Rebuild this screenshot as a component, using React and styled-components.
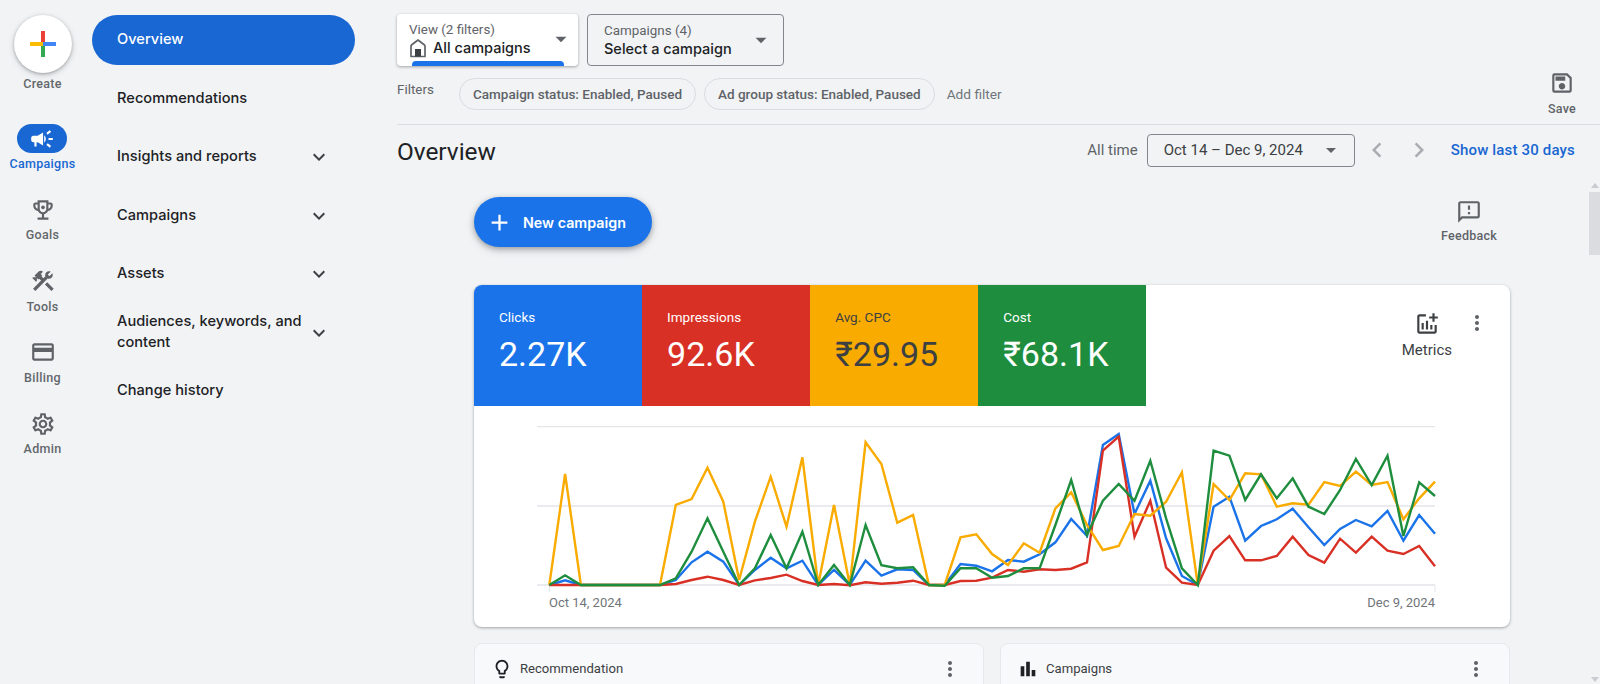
import React from "react";
import styled, { createGlobalStyle } from "styled-components";
import {
  MdCampaign, MdConstruction, MdOutlineCreditCard, MdOutlineSettings, MdOutlineSave,
  MdOutlineFeedback, MdOutlineAddchart, MdLightbulbOutline, MdBarChart, MdMoreVert,
  MdExpandMore, MdChevronLeft, MdChevronRight, MdArrowDropDown, MdAdd,
} from "react-icons/md";

const Global = createGlobalStyle`
  html, body { margin: 0; height: 684px; overflow: hidden; background: #f1f3f5; }
  * { box-sizing: border-box; }
  body { font-family: Roboto, "Liberation Sans", sans-serif; color: #202124; }
`;

const Page = styled.div`display: flex; width: 1600px; height: 684px; overflow: hidden;`;

const Rail = styled.nav`width: 85px; flex: none; display: flex; flex-direction: column; align-items: center; padding-top: 15px;`;
const CreateButton = styled.div`
  width: 58px; height: 58px; border-radius: 50%; background: #fff;
  box-shadow: 0 1px 3px rgba(60,64,67,.35), 0 2px 6px rgba(60,64,67,.2);
  display: flex; align-items: center; justify-content: center;
`;
const RailLabel = styled.div`
  font-size: 12.5px; font-weight: 500; line-height: 16px; letter-spacing: .3px;
  color: ${p => (p.$active ? "#1967d2" : "#63676b")};
`;
const CreateLabel = styled(RailLabel)`margin: 3px 0 32px;`;
const RailItem = styled.div`display: flex; flex-direction: column; align-items: center; gap: 3px; height: 71.3px;`;
const RailIcon = styled.div`
  width: 50px; height: 29px; border-radius: 15px; display: flex; align-items: center; justify-content: center;
  background: ${p => (p.$active ? "#1967d2" : "transparent")};
  color: ${p => (p.$active ? "#fff" : "#5f6368")};
  font-size: 26px;
`;

const NavColumn = styled.div`width: 312px; flex: none; padding: 15px 0 0 7px; display: flex; flex-direction: column; gap: 8.5px;`;
const NavItem = styled.div`
  width: 263px; height: 50px; border-radius: 25px; padding: 0 24px 0 25px;
  display: flex; align-items: center; justify-content: space-between;
  background: ${p => (p.$active ? "#1967d2" : "transparent")};
  color: ${p => (p.$active ? "#fff" : "#202124")};
  font-family: Inter, Roboto, sans-serif; font-size: 14.6px; font-weight: 500; line-height: 21px; letter-spacing: .03px;
`;
const NavText = styled.span`max-width: 190px; padding-bottom: 1px;`;
const NavChevron = styled(MdExpandMore)`font-size: 24px; color: #3c4043; flex: none;`;

const Main = styled.main`flex: 1; min-width: 0; display: flex; flex-direction: column;`;
const TopBar = styled.header`display: flex; justify-content: space-between; align-items: flex-start; height: 125px; border-bottom: 1px solid #dadce0; padding: 14px 24px 0 0;`;
const TopLeft = styled.div`display: flex; flex-direction: column; gap: 12px;`;
const Selectors = styled.div`display: flex; gap: 9px;`;
const Selector = styled.div`
  position: relative; height: 52px; width: ${p => p.$w}px; border-radius: 4px; padding: ${p => p.$pad};
  display: flex; flex-direction: column; justify-content: flex-start; overflow: hidden;
  background: ${p => (p.$raised ? "#fff" : "transparent")};
  border: ${p => (p.$raised ? "none" : "1px solid #80868b")};
  box-shadow: ${p => (p.$raised ? "0 1px 3px rgba(60,64,67,.45)" : "none")};
`;
const SelectorHint = styled.div`font-size: 13.4px; line-height: 16px; color: #5f6368;`;
const SelectorValue = styled.div`
  display: flex; align-items: center; gap: 6px;
  font-family: Inter, Roboto, sans-serif; font-size: 14.5px; font-weight: 500; line-height: 20px; color: #202124;
`;
const SelectorArrow = styled(MdArrowDropDown)`position: absolute; right: ${p => p.$r}px; top: 12px; font-size: 26px; color: #5f6368;`;
const SelectorBar = styled.div`position: absolute; left: 15px; right: 14px; bottom: 0; height: 5px; background: #1a73e8; border-radius: 4px 4px 0 0;`;

const FilterRow = styled.div`display: flex; align-items: center; height: 32px;`;
const FilterLabel = styled.div`font-size: 13.4px; color: #5f6368; width: 62px; margin-top: -10px;`;
const Chip = styled.div`
  height: 32px; padding: 0 13px; border: 1px solid #dadce0; border-radius: 16px; margin-right: 8px;
  display: flex; align-items: center; font-size: 13.5px; font-weight: 500; color: #5f6368; white-space: nowrap;
`;
const AddFilter = styled.div`font-size: 13.7px; color: #70757a; margin-left: 4px;`;
const ToolButton = styled.div`display: flex; flex-direction: column; align-items: center; gap: 2px; color: #5f6368; font-size: 12.5px; font-weight: 500; letter-spacing: .25px; line-height: 16px;`;
const SaveButton = styled(ToolButton)`margin-top: 56px; gap: 5px;`;
const ToolGlyph = styled.div`font-size: 26px; line-height: 0; color: #5f6368;`;

const TitleRow = styled.div`height: 51px; flex: none; display: flex; align-items: center; padding: 0 25px 1px 0;`;
const Title = styled.h1`margin: 3px 0 0; font-size: 24.4px; font-weight: 400; color: #202124; flex: 1;`;
const RangeLabel = styled.div`font-size: 15px; color: #5f6368; margin-right: 9px;`;
const DateBox = styled.div`
  width: 208px; height: 33px; border: 1px solid #80868b; border-radius: 4px; padding: 0 11px 0 16px;
  display: flex; align-items: center; justify-content: space-between; font-size: 15px; color: #3c4043;
`;
const DateArrow = styled(MdArrowDropDown)`font-size: 24px; color: #5f6368;`;
const Pager = styled.div`display: flex; gap: 12px; margin: 0 17px 0 7px; font-size: 30px; color: #a9adb1; line-height: 0;`;
const LinkText = styled.a`font-size: 15px; font-weight: 500; color: #1967d2; letter-spacing: .17px;`;

const Scroller = styled.div`position: relative; flex: 1; min-height: 0; overflow: hidden; padding: 21px 90px 0 77px;`;
const ScrollBar = styled.div`position: absolute; top: 0; right: 0; bottom: 0; width: 11px; display: flex; flex-direction: column; align-items: center;`;
const ScrollUp = styled.div`margin-top: 7px; width: 0; height: 0; border: 4px solid transparent; border-top: 0; border-bottom: 5px solid #c9ccd0;`;
const ScrollThumb = styled.div`width: 11px; height: 63px; margin-top: 4px; background: #dadce0;`;
const ScrollDown = styled.div`margin-top: auto; margin-bottom: 2px; width: 0; height: 0; border: 4px solid transparent; border-bottom: 0; border-top: 5px solid #c9ccd0;`;

const ActionRow = styled.div`height: 50px; display: flex; justify-content: space-between; align-items: flex-start; padding-right: 13px; margin-bottom: 38px;`;
const NewCampaign = styled.button`
  width: 178px; height: 50px; border: 0; border-radius: 25px; background: #1a73e8; color: #fff; padding: 0 0 0 12px;
  display: flex; align-items: center; gap: 10px;
  font-family: Inter, Roboto, sans-serif; font-size: 14.3px; font-weight: 600;
  box-shadow: 0 2px 5px rgba(60,64,67,.35), 0 3px 10px rgba(60,64,67,.2);
`;
const FeedbackButton = styled(ToolButton)`margin-top: 2px; gap: 3px;`;

const MetricCard = styled.section`background: #fff; border-radius: 8px; height: 342px; overflow: hidden; box-shadow: 0 1px 3px rgba(60,64,67,.45);`;
const TileRow = styled.div`display: flex; height: 121px;`;
const Tile = styled.div`
  width: 168.1px; background: ${p => p.$bg}; color: ${p => p.$fg}; padding: 24px 0 0 25px;
`;
const TileLabel = styled.div`font-size: 13.5px; line-height: 16px;`;
const TileValue = styled.div`font-size: 34px; line-height: 40px; margin-top: 9px;`;
const CardTools = styled.div`flex: 1; display: flex; justify-content: flex-end; align-items: flex-start; padding: 26px 21px 0 0; gap: 13px;`;
const MetricsButton = styled.div`display: flex; flex-direction: column; align-items: center; gap: 4px; font-size: 15px; color: #3c4043;`;
const MetricsGlyph = styled.div`font-size: 26px; line-height: 0; color: #3c4043;`;
const DotsGlyph = styled(MdMoreVert)`font-size: 24px; color: #5f6368; flex: none;`;
const ChartSvg = styled.svg`display: block; width: 100%; height: 186px;`;
const ChartFoot = styled.div`display: flex; justify-content: space-between; padding: 3px 75px 0 75px; font-size: 13px; color: #70757a;`;

const BottomGrid = styled.div`display: grid; grid-template-columns: 1fr 1fr; gap: 16px; margin-top: 16px;`;
const MiniCard = styled.section`height: 90px; background: #f8f9fb; border: 1px solid #e6e8eb; border-radius: 8px; padding: 13px 21px 0 16px; display: flex; align-items: flex-start;`;
const MiniIcon = styled.div`font-size: 22px; line-height: 0; color: #202124; margin-right: 7px; height: 24px; display: flex; align-items: center;`;
const MiniTitle = styled.div`flex: 1; font-size: 13.1px; line-height: 24px; color: #3c4043;`;

const base = 585;
const toY = zy => 410 + zy / 3;
const series = [
  ["#1a73e8", [525,511,525,525,525,525,525,525,510,457,425,455,525,480,443,475,452,525,480,525,452,497,478,480,525,525,462,467,484,450,455,433,397,327,378,105,72,312,212,385,498,525,290,260,392,348,328,296,352,405,357,330,349,303,392,315,371]],
  ["#d93025", [525,525,525,525,525,525,525,525,522,510,500,510,525,511,504,494,513,525,522,526,517,521,518,512,525,525,513,512,503,480,485,478,480,476,457,122,80,380,272,473,518,525,422,378,451,451,438,380,435,458,386,428,380,422,432,408,469]],
  ["#f9ab00", [525,192,525,525,525,525,525,525,285,267,173,275,510,335,200,350,142,525,285,525,97,162,338,315,525,525,382,373,432,465,400,428,295,247,345,420,408,312,317,275,187,525,222,270,190,193,290,280,284,216,228,185,225,216,328,265,215]],
  ["#1e8e3e", [525,496,525,525,525,525,525,525,505,425,325,425,525,475,375,475,365,525,465,525,345,466,475,472,525,527,475,475,503,498,475,475,345,210,375,272,222,272,152,325,475,525,122,137,270,193,265,205,290,312,240,147,225,137,378,217,258]],
];
const pts = ys => ys.map((y, i) => `${(549.3 + 15.816 * i).toFixed(1)},${toY(y).toFixed(1)}`).join(" ");

const ColorPlus = () => (
  <svg width="28" height="28" viewBox="0 0 28 28">
    <rect x="12" y="1" width="4" height="13" fill="#ea4335" />
    <rect x="12" y="14" width="4" height="13" fill="#34a853" />
    <rect x="1" y="12" width="13" height="4" fill="#fbbc04" />
    <rect x="14" y="12" width="13" height="4" fill="#4285f4" />
  </svg>
);
const Trophy = () => (
  <svg width="26" height="26" viewBox="0 0 24 24" fill="currentColor">
    <path d="M19 5h-2V3H7v2H5c-1.1 0-2 .9-2 2v1c0 2.55 1.92 4.63 4.39 4.94.63 1.5 1.98 2.63 3.61 2.96V19H7v2h10v-2h-4v-3.1c1.63-.33 2.98-1.46 3.61-2.96C19.08 12.63 21 10.55 21 8V7c0-1.1-.9-2-2-2zM5 8V7h2v3.82C5.84 10.4 5 9.3 5 8zm7 6c-1.65 0-3-1.35-3-3V5h6v6c0 1.65-1.35 3-3 3zm7-6c0 1.3-.84 2.4-2 2.82V7h2v1z" />
    <circle cx="12" cy="9.5" r="1.7" />
  </svg>
);
const HouseGlyph = () => (
  <svg width="18" height="20" viewBox="0 0 18 20" style={{ flex: "none" }}>
    <path d="M2 18.5V8.2C2 7.6 2.3 7.1 2.8 6.7L9 2l6.2 4.7c.5.4.8.9.8 1.5v10.3z" fill="none" stroke="#5f6368" strokeWidth="1.7" strokeLinejoin="round" />
    <rect x="6" y="11" width="6" height="7.5" fill="#3c4043" />
  </svg>
);

const railItems = [
  { label: "Campaigns", icon: <MdCampaign />, active: true },
  { label: "Goals", icon: <Trophy /> },
  { label: "Tools", icon: <MdConstruction /> },
  { label: "Billing", icon: <MdOutlineCreditCard /> },
  { label: "Admin", icon: <MdOutlineSettings /> },
];
const navItems = [
  { label: "Overview", active: true },
  { label: "Recommendations" },
  { label: "Insights and reports", more: true },
  { label: "Campaigns", more: true },
  { label: "Assets", more: true },
  { label: "Audiences, keywords, and content", more: true },
  { label: "Change history" },
];
const tiles = [
  { label: "Clicks", value: "2.27K", bg: "#1a73e8", fg: "#fff" },
  { label: "Impressions", value: "92.6K", bg: "#d93025", fg: "#fff" },
  { label: "Avg. CPC", value: "₹29.95", bg: "#f9ab00", fg: "#3c4043" },
  { label: "Cost", value: "₹68.1K", bg: "#1e8e3e", fg: "#fff" },
];

export default function App() {
  return (
    <Page>
      <Global />
      <Rail>
        <CreateButton><ColorPlus /></CreateButton>
        <CreateLabel>Create</CreateLabel>
        {railItems.map(r => (
          <RailItem key={r.label}>
            <RailIcon $active={r.active}>{r.icon}</RailIcon>
            <RailLabel $active={r.active}>{r.label}</RailLabel>
          </RailItem>
        ))}
      </Rail>
      <NavColumn>
        {navItems.map(n => (
          <NavItem key={n.label} $active={n.active}>
            <NavText>{n.label}</NavText>
            {n.more && <NavChevron />}
          </NavItem>
        ))}
      </NavColumn>
      <Main>
        <TopBar>
          <TopLeft>
            <Selectors>
              <Selector $raised $w={181} $pad="8px 0 0 12px">
                <SelectorHint>View (2 filters)</SelectorHint>
                <SelectorValue><HouseGlyph />All campaigns</SelectorValue>
                <SelectorArrow $r={4} />
                <SelectorBar />
              </Selector>
              <Selector $w={197} $pad="7.5px 0 0 16px">
                <SelectorHint>Campaigns (4)</SelectorHint>
                <SelectorValue>Select a campaign</SelectorValue>
                <SelectorArrow $r={9} />
              </Selector>
            </Selectors>
            <FilterRow>
              <FilterLabel>Filters</FilterLabel>
              <Chip>Campaign status: Enabled, Paused</Chip>
              <Chip>Ad group status: Enabled, Paused</Chip>
              <AddFilter>Add filter</AddFilter>
            </FilterRow>
          </TopLeft>
          <SaveButton><ToolGlyph><MdOutlineSave /></ToolGlyph>Save</SaveButton>
        </TopBar>
        <TitleRow>
          <Title>Overview</Title>
          <RangeLabel>All time</RangeLabel>
          <DateBox>Oct 14 – Dec 9, 2024<DateArrow /></DateBox>
          <Pager><MdChevronLeft /><MdChevronRight /></Pager>
          <LinkText>Show last 30 days</LinkText>
        </TitleRow>
        <Scroller>
          <ActionRow>
            <NewCampaign><MdAdd size={27} />New campaign</NewCampaign>
            <FeedbackButton><ToolGlyph><MdOutlineFeedback /></ToolGlyph>Feedback</FeedbackButton>
          </ActionRow>
          <MetricCard>
            <TileRow>
              {tiles.map(t => (
                <Tile key={t.label} $bg={t.bg} $fg={t.fg}>
                  <TileLabel>{t.label}</TileLabel>
                  <TileValue>{t.value}</TileValue>
                </Tile>
              ))}
              <CardTools>
                <MetricsButton><MetricsGlyph><MdOutlineAddchart /></MetricsGlyph>Metrics</MetricsButton>
                <DotsGlyph />
              </CardTools>
            </TileRow>
            <ChartSvg viewBox="474 406 1036 186" preserveAspectRatio="none">
              {[426.7, 506, base].map(y => (
                <line key={y} x1="537" x2="1435" y1={y} y2={y} stroke="#e3e5e8" strokeWidth="1.3" />
              ))}
              <line x1="549.3" x2="549.3" y1={base} y2="592" stroke="#e3e5e8" />
              <line x1="1435" x2="1435" y1={base} y2="592" stroke="#e3e5e8" />
              {series.map(([c, ys]) => (
                <polyline key={c} points={pts(ys)} fill="none" stroke={c} strokeWidth="2.4" strokeLinejoin="miter" />
              ))}
            </ChartSvg>
            <ChartFoot><span>Oct 14, 2024</span><span>Dec 9, 2024</span></ChartFoot>
          </MetricCard>
          <BottomGrid>
            <MiniCard>
              <MiniIcon><MdLightbulbOutline /></MiniIcon>
              <MiniTitle>Recommendation</MiniTitle>
              <DotsGlyph />
            </MiniCard>
            <MiniCard>
              <MiniIcon><MdBarChart /></MiniIcon>
              <MiniTitle>Campaigns</MiniTitle>
              <DotsGlyph />
            </MiniCard>
          </BottomGrid>
          <ScrollBar><ScrollUp /><ScrollThumb /><ScrollDown /></ScrollBar>
        </Scroller>
      </Main>
    </Page>
  );
}
